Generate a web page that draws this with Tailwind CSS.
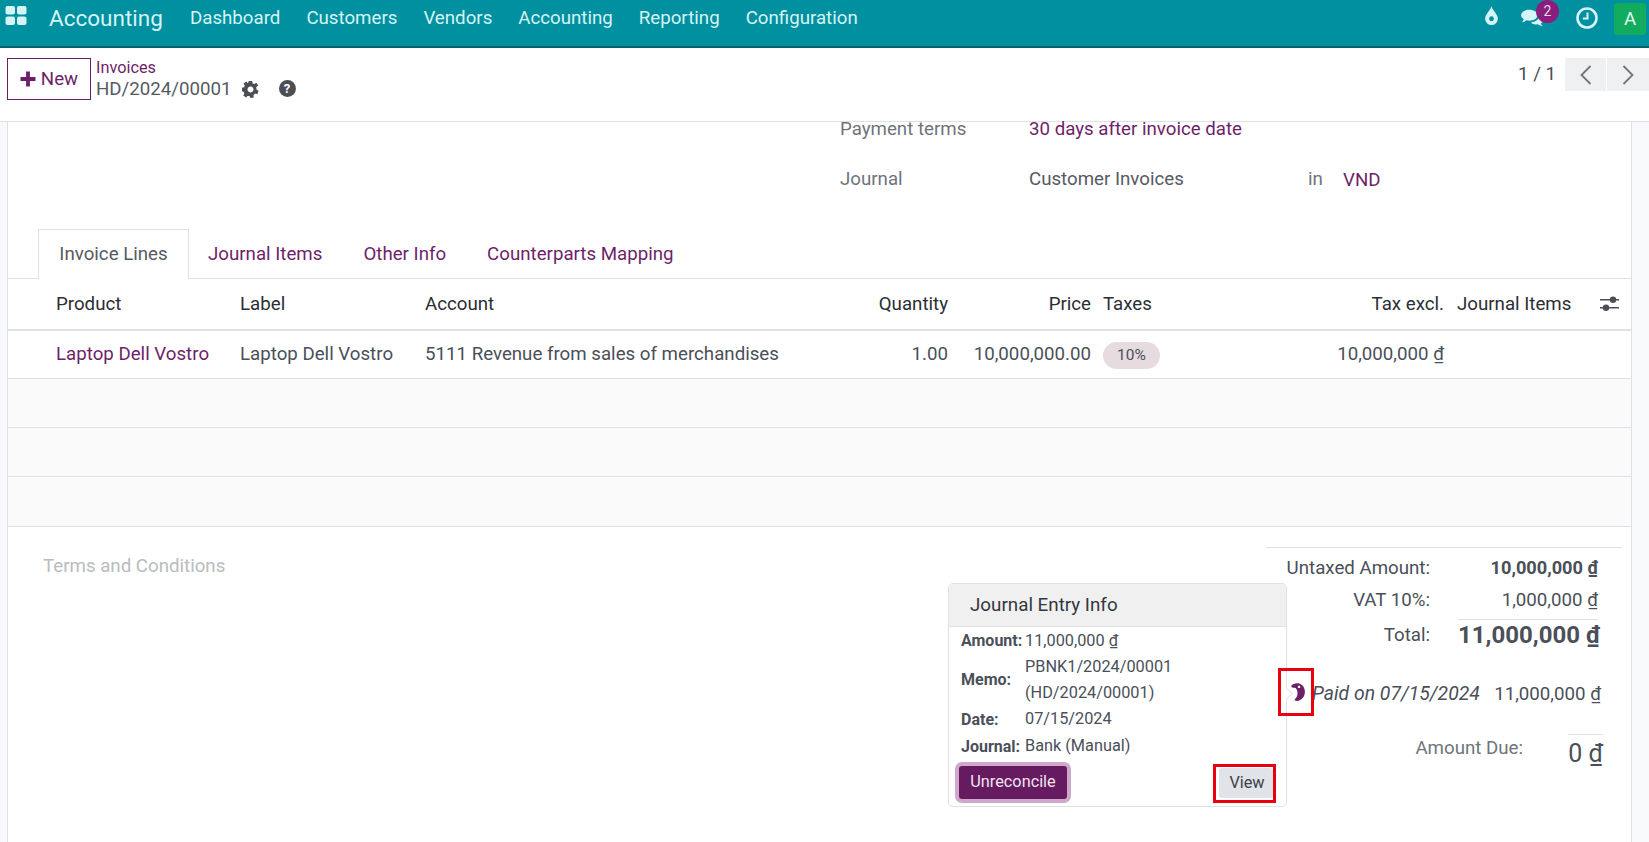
<!doctype html>
<html lang="en">
  <head>
    <meta charset="utf-8" />
    <title>HD/2024/00001 - Invoices</title>
    <script src="https://cdn.jsdelivr.net/npm/@tailwindcss/browser@4"></script>
  </head>
  <body class="h-[842px] w-[1649px] overflow-hidden flex flex-col bg-[#f8f9fb] font-['Roboto',sans-serif] text-[18.7px] text-[#4a4f59]">
    <!-- top nav -->
    <nav class="h-[48px] shrink-0 flex items-center bg-[#01909f] border-b-2 border-[#01626d] text-[#d5f4f6]">
      <svg class="ml-[5px] mb-[14px] w-[22px] h-[22px]" viewBox="0 0 22 22" fill="currentColor">
        <rect x="0.5" y="1" width="9.5" height="8.5" rx="2" />
        <rect x="12" y="1" width="9.5" height="8.5" rx="2" />
        <rect x="0.5" y="11.5" width="9.5" height="8.5" rx="2" />
        <rect x="12" y="11.5" width="9.5" height="8.5" rx="2" />
      </svg>
      <span class="ml-[22px] mb-[9px] text-[22.5px] w-[141px]">Accounting</span>
      <div class="flex gap-[26px] mb-[10px]">
        <a>Dashboard</a>
        <a>Customers</a>
        <a>Vendors</a>
        <a>Accounting</a>
        <a>Reporting</a>
        <a>Configuration</a>
      </div>
      <div class="ml-auto flex items-center relative h-full">
        <svg class="w-[15px] h-[20px] mb-[16px]" viewBox="0 0 16 22" fill="currentColor">
          <path fill-rule="evenodd" d="M8 1C9 6 15 10 15 15A7 7 0 0 1 1 15C1 10 7 6 8 1ZM8 12.5a2.6 2.6 0 1 0 .01 0Z" />
        </svg>
        <svg class="ml-[21px] w-[24px] h-[20px] mb-[10px]" viewBox="0 0 26 22" fill="currentColor">
          <path d="M10 2C15 2 19 4.600 19 8C19 11.400 15 14 10 14C8.800 14 8 13.900 7 13.600C5.500 14.800 4 15.400 2 15.600C3 14.600 3.800 13.400 4 12.200C2 11 1 9.600 1 8C1 4.600 5 2 10 2Z" />
          <path d="M20.500 9C23 10 25 11.500 25 13.500C25 15 24 16 22.800 17C23 18 24 19.300 25 20C23 20 20.800 19.200 19.400 18C18 18.300 15 18.200 13 17L12 15.500C16 15.500 21 13 20.500 9Z" />
        </svg>
        <span class="absolute left-[52px] top-0 w-[23px] h-[23px] rounded-full bg-[#8a1d7d] text-[#e8d6e6] text-[14px] flex items-center justify-center">2</span>
        <svg class="ml-[32px] w-[22px] h-[22px] mb-[10px]" viewBox="0 0 22 22" fill="none" stroke="currentColor">
          <circle cx="11" cy="11" r="9.500" stroke-width="2.600" />
          <path d="M11.500 5.500V11.500H6.800" stroke-width="2" />
        </svg>
        <span class="ml-[16px] mr-[3px] mb-[8px] w-[32px] h-[32px] rounded-[3px] bg-[#12ac5e] text-[#e6f7ee] flex items-center justify-center">A</span>
      </div>
    </nav>

    <!-- control panel -->
    <header class="h-[74px] shrink-0 bg-white border-b border-[#dee2e6] flex items-start">
      <button class="ml-[7px] mt-[10px] w-[84px] h-[42px] border border-[#6b1d66] text-[#6e1f69] flex items-center justify-center gap-[5px]">
        <svg class="w-[16px] h-[16px]" viewBox="0 0 15 15" fill="currentColor"><path d="M5.700 .5H9.300V5.700H14.500V9.300H9.300V14.500H5.700V9.300H.5V5.700H5.700Z" /></svg>
        New
      </button>
      <div class="ml-[5px] mt-[9px] flex flex-col">
        <a class="text-[16.3px] leading-[22px] text-[#6e1f69]">Invoices</a>
        <div class="flex items-center text-[#555a63] leading-[21px]">
          <span>HD/2024/00001</span>
          <svg class="ml-[10px] mb-[1px] w-[17px] h-[17px]" viewBox="0 0 20 20" fill="#4b4f55">
            <path fill-rule="evenodd" d="M8 0H12L12.500 2.800L14.500 3.600L16.900 2L19 5.400L16.800 7L17 10L19.500 11.500L18 15.500L15.500 14.800L13.500 16.800L13.900 19.500L10 20L8.800 17.500H6.500L4.800 19.500L1.500 17.200L2.800 14.800L1.800 12.500L0 12V8L2.500 7.300L3.200 5L1.800 2.800L5 .7L7 2.700ZM10 6.500a3.500 3.500 0 1 0 .01 0Z" />
          </svg>
          <span class="ml-[20px] mb-[3px] w-[17px] h-[17px] rounded-full bg-[#4b4f55] text-white text-[13px] font-bold flex items-center justify-center">?</span>
        </div>
      </div>
      <div class="ml-auto mt-[10px] flex items-center h-[33px]">
        <span class="text-[#4a4f59] mr-[9px] mb-[1px]">1 / 1</span>
        <button class="w-[41px] h-[33px] bg-[#eef0f2] flex items-center justify-center">
          <svg class="w-[12px] h-[20px]" viewBox="0 0 12 20" fill="none" stroke="#70757b" stroke-width="1.800"><path d="M10.500 1L1.500 10L10.500 19" /></svg>
        </button>
        <button class="ml-[1px] w-[42px] h-[33px] bg-[#eef0f2] flex items-center justify-center">
          <svg class="w-[12px] h-[20px]" viewBox="0 0 12 20" fill="none" stroke="#70757b" stroke-width="1.800"><path d="M1.500 1L10.500 10L1.500 19" /></svg>
        </button>
      </div>
    </header>

    <!-- form sheet -->
    <main class="relative flex-1 ml-[7px] w-[1625px] bg-white border-x border-[#dee2e6]">
      <div class="ml-[832px] -mt-[2px] text-[#6f747c]">
        <div class="flex h-[18px] items-center">
          <span class="w-[189px]">Payment terms</span>
          <a class="text-[#6e1f69]">30 days after invoice date</a>
        </div>
        <div class="flex mt-[32px] h-[18px] items-center">
          <span class="w-[189px]">Journal</span>
          <span class="w-[280px] text-[#555a63]">Customer Invoices</span>
          <span class="w-[35px] -ml-[1px] text-[#6f747c]">in</span>
          <a class="mt-[2px] text-[#6e1f69]">VND</a>
        </div>
      </div>

      <!-- tabs -->
      <div class="mt-[41px] h-[50px] pl-[30px] flex items-stretch border-b border-[#dee2e6] text-[#6e1f69]">
        <span class="relative w-[151px] -mb-px bg-white border border-b-0 border-[#dee2e6] text-[#555a63] flex items-center justify-center">Invoice Lines</span>
        <span class="ml-[19px] pt-[1px] flex items-center">Journal Items</span>
        <span class="ml-[41px] pt-[1px] flex items-center">Other Info</span>
        <span class="ml-[41px] pt-[1px] flex items-center">Counterparts Mapping</span>
      </div>

      <!-- invoice lines -->
      <div class="grid grid-cols-[184px_185px_385px_138px_143px_209px_144px_146px_1fr] pl-[48px] h-[52px] items-center border-b-2 border-[#dee2e6] text-[#2b2e35]">
        <span>Product</span>
        <span>Label</span>
        <span>Account</span>
        <span class="text-right">Quantity</span>
        <span class="text-right">Price</span>
        <span class="pl-[12px]">Taxes</span>
        <span class="text-right">Tax excl.</span>
        <span class="pl-[13px]">Journal Items</span>
        <svg class="ml-[10px] w-[20px] h-[18px]" viewBox="0 0 20 18" fill="#4b4f55">
          <rect x="0" y="4" width="19" height="1.500" />
          <rect x="0" y="12" width="19" height="1.500" />
          <circle cx="13" cy="4.800" r="3.200" />
          <circle cx="6" cy="12.800" r="3.200" />
        </svg>
      </div>
      <div class="grid grid-cols-[184px_185px_385px_138px_143px_209px_144px_146px_1fr] pl-[48px] h-[48px] items-center border-b border-[#dee2e6]">
        <a class="text-[#6e1f69]">Laptop Dell Vostro</a>
        <span>Laptop Dell Vostro</span>
        <span>5111 Revenue from sales of merchandises</span>
        <span class="text-right">1.00</span>
        <span class="text-right">10,000,000.00</span>
        <span class="pl-[12px]"><span class="inline-flex items-center justify-center w-[57px] h-[27px] rounded-full bg-[#e6dcdf] text-[15.500px]">10%</span></span>
        <span class="text-right">10,000,000 <span class="underline">₫</span></span>
      </div>
      <div class="h-[49px] bg-[#fafafa] border-b border-[#dee2e6]"></div>
      <div class="h-[49px] bg-[#fafafa] border-b border-[#dee2e6]"></div>
      <div class="h-[50px] bg-[#fafafa] border-b border-[#dee2e6]"></div>

      <!-- notes and totals -->
      <div class="flex items-start">
        <span class="ml-[35px] mt-[25px] text-[#b9bcc0]">Terms and Conditions</span>
        <div class="ml-auto mr-[9px] mt-[20px] w-[356px] border-t border-[#dee2e6] flex flex-col">
          <div class="flex h-[40px] items-center">
            <span class="w-[164px] text-right">Untaxed Amount:</span>
            <span class="w-[168px] text-right font-bold text-[18.2px]">10,000,000 <span class="underline">₫</span></span>
          </div>
          <div class="flex h-[24px] items-center">
            <span class="w-[164px] text-right">VAT 10%:</span>
            <span class="w-[168px] text-right">1,000,000 <span class="underline">₫</span></span>
          </div>
          <div class="flex mt-[7px] h-[32px] items-center">
            <span class="w-[164px] text-right">Total:</span>
            <span class="ml-[28px] w-[140px] text-right font-bold text-[24px] whitespace-nowrap border-t border-[#dee2e6] leading-[31px]">11,000,000 <span class="underline">₫</span></span>
          </div>
          <div class="flex mt-[31px] h-[24px] items-center whitespace-nowrap">
            <span class="ml-[46px] italic w-[170px] text-[19.4px]">Paid on 07/15/2024</span>
            <span class="w-[119px] text-right">11,000,000 <span class="underline">₫</span></span>
          </div>
          <div class="flex mt-[28px] items-start">
            <span class="w-[257px] text-right text-[#6f747c]">Amount Due:</span>
            <span class="ml-[45px] w-[35px] text-right text-[25px] border-t border-[#dee2e6] whitespace-nowrap">0 <span class="underline">₫</span></span>
          </div>
        </div>
      </div>

      <!-- payment popover -->
      <div class="absolute left-[940px] top-[461px] w-[339px] h-[224px] bg-white border border-[#dfe1e4] rounded-[5px] flex flex-col">
        <div class="h-[43px] shrink-0 pl-[21px] pt-[1px] bg-[#f0f0f0] border-b border-[#dfe1e4] rounded-t-[5px] flex items-center text-[#33373e] text-[18.800px]">Journal Entry Info</div>
        <div class="pl-[12px] pt-[2px] text-[16.300px]">
          <div class="flex items-center h-[24px]"><b class="w-[64px] text-[#4a4f59] text-[16px]">Amount:</b><span>11,000,000 <span class="underline">₫</span></span></div>
          <div class="flex items-center h-[53px]"><b class="w-[64px] text-[#4a4f59] text-[16px]">Memo:</b><span class="leading-[26px]">PBNK1/2024/00001<br />(HD/2024/00001)</span></div>
          <div class="flex items-center h-[27px]"><b class="w-[64px] text-[#4a4f59] text-[16px]">Date:</b><span>07/15/2024</span></div>
          <div class="flex items-center h-[27px]"><b class="w-[64px] text-[#4a4f59] text-[16px]">Journal:</b><span>Bank (Manual)</span></div>
        </div>
        <div class="flex items-start justify-between pl-[10px] pr-[13px] mt-[6px]">
          <button class="w-[108px] h-[33px] rounded-[3px] bg-[#661a5f] text-[#f0e4ef] text-[16.300px] ring-4 ring-[#cfa8cc]">Unreconcile</button>
          <button class="relative mt-[2px] pl-[2px] w-[54px] h-[30px] rounded-[3px] bg-[#e0e3e8] text-[#3c4047] text-[16.300px]">View
            <span class="absolute -left-[6px] -top-[4px] w-[63px] h-[39px] border-[3px] border-[#e8000f]"></span>
          </button>
        </div>
      </div>
      <!-- popover arrow -->
      <div class="absolute left-[1274px] top-[567px] w-[9px] h-[9px] rotate-45 bg-white border-t border-r border-[#dfe1e4]"></div>

      <!-- widget info icon, half under the popover -->
      <div class="absolute left-[1270px] top-[546px] w-[36px] h-[48px] border-[3px] border-[#e8000f] flex items-center justify-center">
        <svg class="w-[14px] h-[18px] ml-[3px]" viewBox="0 0 13 17" fill="#6e1f69">
          <path fill-rule="evenodd" d="M0 3C1.500 .5 5 0 7.500 .5C11 1.500 13 4.500 13 8.500C13 12.500 10.500 16 6 17C5 17 4 16.700 3 16C5 14 6.500 12 6 8.500C6 6.500 4.500 4.500 3 4.500C1.500 4.500 .5 4 0 3ZM7.500 2.400a1.200 1.200 0 1 0 .01 0Z" />
        </svg>
      </div>
    </main>
  </body>
</html>
